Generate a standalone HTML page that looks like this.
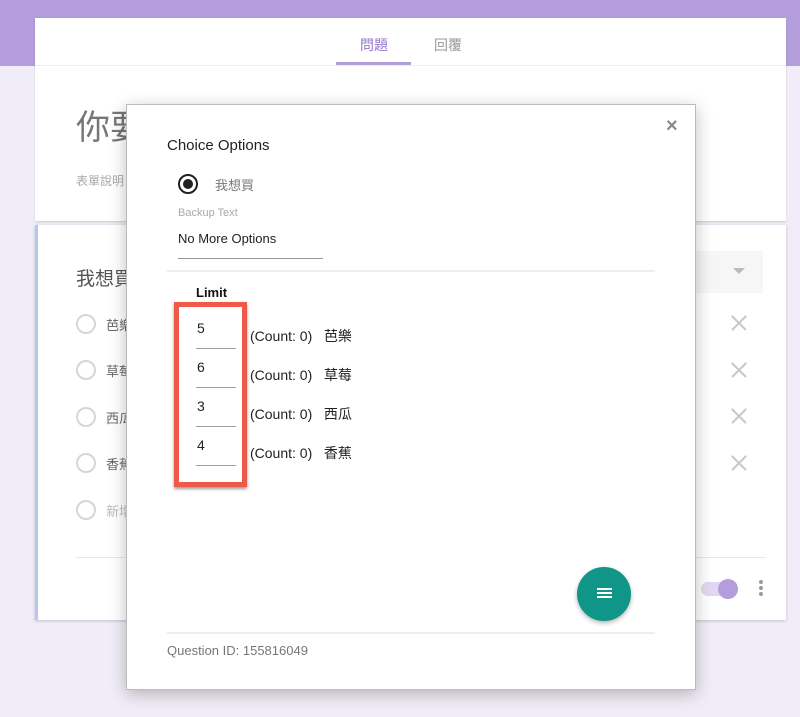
<!DOCTYPE html>
<html><head><meta charset="utf-8"><style>
*{margin:0;padding:0;box-sizing:border-box}
body{width:800px;height:717px;background:#f1edf8;position:relative;overflow:hidden;font-family:"Liberation Sans","Noto Sans CJK TC",sans-serif}
.a{position:absolute}
.x{position:absolute;width:16px;height:16px}
.x:before,.x:after{content:"";position:absolute;left:-2px;top:7px;width:20px;height:1.5px;background:#c8c8c8;transform:rotate(45deg)}
.x:after{transform:rotate(-45deg)}
.rad{position:absolute;width:20px;height:20px;border:2px solid #d6d6d6;border-radius:50%}
.opt{position:absolute;font-size:13px;color:#666}
.num{position:absolute;left:197px;font-size:14px;color:#222}
.ul{position:absolute;left:196px;width:40px;height:1px;background:#9e9e9e}
.cnt{position:absolute;left:250px;font-size:14px;color:#222}
</style></head><body>
<div class="a" style="left:0;top:0;width:800px;height:66px;background:#b39ddb"></div>
<div class="a" style="left:35px;top:18px;width:751px;height:203px;background:#fff;box-shadow:0 1px 2px rgba(0,0,0,.15)"></div>
<div class="a" style="left:35px;top:65px;width:751px;height:1px;background:#eee"></div>
<div class="a" style="left:360px;top:35px;font-size:14px;color:#9575cd">問題</div>
<div class="a" style="left:434px;top:35px;font-size:14px;color:#999">回覆</div>
<div class="a" style="left:336px;top:62px;width:75px;height:3px;background:#b39ddb"></div>
<div class="a" style="left:76px;top:100px;font-size:34px;color:#777">你要</div>
<div class="a" style="left:76px;top:172px;font-size:12px;color:#aaa">表單說明</div>
<div class="a" style="left:35px;top:225px;width:751px;height:395px;background:#fff;box-shadow:0 1px 3px rgba(0,0,0,.2)"></div>
<div class="a" style="left:35px;top:225px;width:3px;height:395px;background:#b4c8f0"></div>
<div class="a" style="left:76px;top:264px;font-size:19px;color:#555">我想買</div>
<div class="a" style="left:695px;top:251px;width:68px;height:42px;background:#f6f6f6"></div>
<div class="a" style="left:733px;top:268px;width:0;height:0;border-left:6px solid transparent;border-right:6px solid transparent;border-top:6px solid #bbb"></div>
<div class="rad" style="left:76px;top:314px"></div><div class="opt" style="left:106px;top:315px">芭樂</div>
<div class="rad" style="left:76px;top:360px"></div><div class="opt" style="left:106px;top:361px">草莓</div>
<div class="rad" style="left:76px;top:407px"></div><div class="opt" style="left:106px;top:408px">西瓜</div>
<div class="rad" style="left:76px;top:453px"></div><div class="opt" style="left:106px;top:454px">香蕉</div>
<div class="rad" style="left:76px;top:500px"></div><div class="opt" style="left:106px;top:501px;color:#bbb">新增</div>
<div class="x" style="left:731px;top:315px"></div>
<div class="x" style="left:731px;top:362px"></div>
<div class="x" style="left:731px;top:408px"></div>
<div class="x" style="left:731px;top:455px"></div>
<div class="a" style="left:76px;top:557px;width:690px;height:1px;background:#e8e8e8"></div>
<div class="a" style="left:701px;top:582px;width:34px;height:14px;border-radius:7px;background:#e2d8f3"></div>
<div class="a" style="left:718px;top:579px;width:20px;height:20px;border-radius:50%;background:#b39ddb"></div>
<div class="a" style="left:759px;top:580px;width:4px;height:4px;border-radius:50%;background:#999;box-shadow:0 6px 0 #999,0 12px 0 #999"></div>

<div class="a" style="left:126px;top:104px;width:570px;height:586px;background:#fff;border:1px solid #bbb;box-shadow:0 4px 16px rgba(0,0,0,.25)"></div>
<div class="a" style="left:666px;top:115px;font-size:20px;color:#888;font-weight:bold">×</div>
<div class="a" style="left:167px;top:137px;font-size:15px;color:#222">Choice Options</div>
<div class="a" style="left:178px;top:174px;width:20px;height:20px;border:2px solid #222;border-radius:50%"></div>
<div class="a" style="left:183px;top:179px;width:10px;height:10px;background:#222;border-radius:50%"></div>
<div class="a" style="left:215px;top:175px;font-size:13px;color:#777">我想買</div>
<div class="a" style="left:178px;top:207px;font-size:11px;color:#aaa">Backup Text</div>
<div class="a" style="left:178px;top:231px;font-size:13px;color:#222">No More Options</div>
<div class="a" style="left:178px;top:258px;width:145px;height:1px;background:#999"></div>
<div class="a" style="left:167px;top:270px;width:488px;height:2px;background:#eee"></div>
<div class="a" style="left:196px;top:285px;font-size:13px;font-weight:bold;color:#111">Limit</div>
<div class="a" style="left:174px;top:302px;width:73px;height:185px;border:5px solid #ee5a4a;box-shadow:0 2px 3px rgba(0,0,0,.4)"></div>
<div class="num" style="top:320px">5</div><div class="ul" style="top:348px"></div>
<div class="num" style="top:359px">6</div><div class="ul" style="top:387px"></div>
<div class="num" style="top:398px">3</div><div class="ul" style="top:426px"></div>
<div class="num" style="top:437px">4</div><div class="ul" style="top:465px"></div>
<div class="cnt" style="top:326px">(Count: 0)&nbsp;&nbsp;&nbsp;芭樂</div>
<div class="cnt" style="top:365px">(Count: 0)&nbsp;&nbsp;&nbsp;草莓</div>
<div class="cnt" style="top:404px">(Count: 0)&nbsp;&nbsp;&nbsp;西瓜</div>
<div class="cnt" style="top:443px">(Count: 0)&nbsp;&nbsp;&nbsp;香蕉</div>
<div class="a" style="left:577px;top:567px;width:54px;height:54px;border-radius:50%;background:#0f9688;box-shadow:0 2px 5px rgba(0,0,0,.3)"></div>
<div class="a" style="left:597px;top:588px;width:15px;height:2px;background:#fff;box-shadow:0 4px 0 #fff,0 8px 0 #fff"></div>
<div class="a" style="left:167px;top:632px;width:488px;height:2px;background:#eee"></div>
<div class="a" style="left:167px;top:643px;font-size:13px;color:#777">Question ID: 155816049</div>
</body></html>
